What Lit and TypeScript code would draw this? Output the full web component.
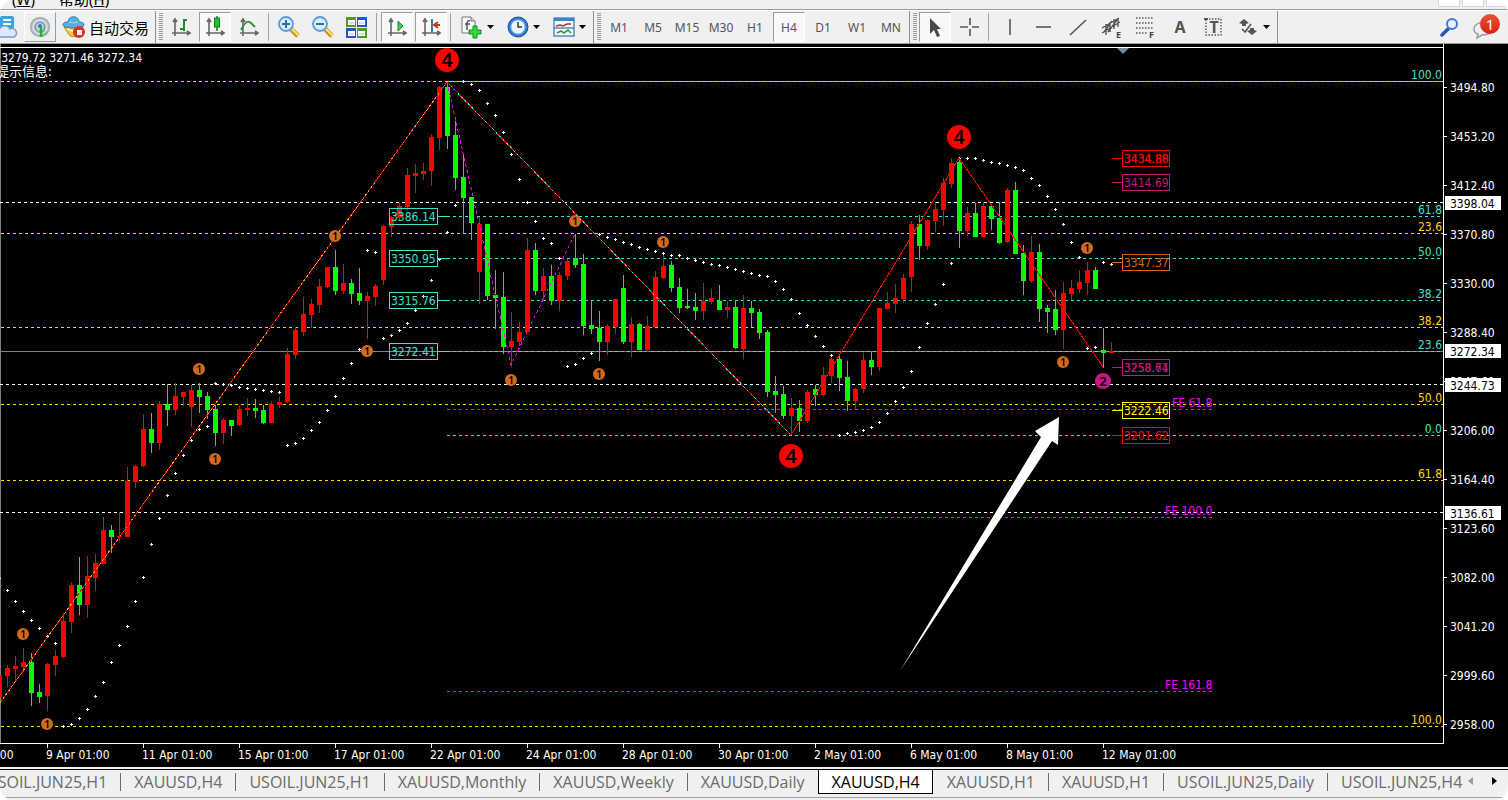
import { LitElement, html, svg, css } from "lit";
import { customElement, state } from "lit/decorators.js";
import { classMap } from "lit/directives/class-map.js";

type Dir = "r" | "g";

/* One row per bar, eight pixels apart: high, body top, body bottom, low, direction. */
const BARS: [number, number, number, number, Dir][] = [
  [675, 675, 697, 697, "r"], [665, 668, 676, 687, "r"], [656, 666, 669, 682, "r"], [648, 662, 667, 672, "r"],
  [653, 662, 693, 706, "g"], [684, 692, 697, 703, "g"], [663, 664, 696, 711, "r"], [650, 656, 665, 676, "r"],
  [613, 621, 657, 658, "r"], [582, 585, 622, 633, "r"], [557, 585, 605, 615, "g"], [556, 576, 605, 618, "r"],
  [554, 563, 578, 591, "r"], [517, 530, 564, 564, "r"], [525, 530, 537, 553, "g"], [512, 536, 537, 541, "r"],
  [467, 481, 537, 537, "r"], [465, 466, 482, 488, "r"], [414, 429, 466, 467, "r"], [413, 429, 443, 453, "g"],
  [401, 404, 443, 450, "r"], [384, 404, 410, 426, "g"], [383, 396, 410, 415, "r"], [392, 392, 397, 406, "r"],
  [385, 390, 407, 427, "r"], [383, 390, 397, 413, "g"], [392, 396, 410, 419, "g"], [405, 409, 433, 446, "g"],
  [418, 420, 433, 444, "r"], [420, 420, 426, 436, "g"], [406, 409, 425, 426, "r"], [398, 408, 410, 416, "r"],
  [399, 408, 411, 418, "g"], [405, 410, 423, 424, "g"], [401, 404, 423, 423, "r"], [397, 402, 405, 408, "r"],
  [348, 354, 402, 403, "r"], [327, 330, 355, 359, "r"], [297, 314, 332, 336, "r"], [299, 304, 315, 328, "r"],
  [279, 286, 305, 313, "r"], [267, 267, 287, 288, "r"], [250, 267, 291, 295, "g"], [264, 283, 291, 294, "r"],
  [279, 283, 294, 304, "g"], [268, 293, 301, 305, "g"], [292, 296, 301, 339, "r"], [284, 286, 297, 306, "r"],
  [225, 226, 280, 285, "r"], [216, 217, 227, 237, "r"], [203, 206, 218, 221, "r"], [168, 175, 207, 210, "r"],
  [164, 173, 176, 193, "r"], [163, 171, 174, 180, "r"], [134, 137, 171, 186, "r"], [86, 87, 138, 150, "r"],
  [82, 87, 136, 149, "g"], [121, 135, 178, 190, "g"], [153, 177, 198, 234, "g"], [197, 197, 223, 240, "g"],
  [217, 224, 272, 304, "r"], [224, 224, 296, 300, "g"], [270, 295, 298, 329, "g"], [272, 297, 347, 354, "g"],
  [312, 341, 347, 367, "r"], [322, 332, 342, 346, "r"], [238, 250, 332, 332, "r"], [243, 250, 291, 295, "g"],
  [268, 276, 291, 301, "r"], [265, 276, 301, 305, "g"], [272, 275, 301, 311, "r"], [259, 261, 276, 280, "r"],
  [234, 258, 265, 268, "g"], [254, 264, 326, 335, "g"], [301, 325, 329, 334, "g"], [311, 328, 342, 361, "g"],
  [324, 326, 342, 355, "r"], [299, 299, 327, 334, "r"], [275, 288, 342, 344, "g"], [317, 324, 342, 357, "r"],
  [323, 324, 350, 350, "g"], [316, 326, 350, 352, "r"], [271, 277, 327, 327, "r"], [254, 266, 278, 279, "r"],
  [261, 265, 288, 292, "g"], [278, 287, 308, 313, "g"], [289, 306, 308, 309, "g"], [293, 307, 311, 320, "g"],
  [283, 301, 311, 320, "r"], [289, 298, 302, 304, "r"], [285, 301, 310, 310, "g"], [301, 307, 310, 318, "r"],
  [300, 307, 348, 349, "g"], [295, 308, 349, 359, "r"], [301, 308, 313, 327, "g"], [309, 312, 333, 339, "g"],
  [330, 332, 392, 397, "g"], [376, 391, 395, 413, "g"], [386, 394, 416, 419, "g"], [398, 408, 416, 434, "r"],
  [400, 408, 421, 432, "g"], [390, 392, 421, 423, "r"], [385, 389, 395, 406, "g"], [367, 375, 395, 396, "r"],
  [356, 359, 376, 383, "r"], [355, 359, 378, 391, "g"], [361, 377, 401, 411, "g"], [388, 389, 401, 409, "r"],
  [353, 360, 389, 393, "r"], [352, 360, 367, 375, "g"], [308, 308, 367, 371, "r"], [292, 303, 309, 309, "r"],
  [284, 298, 304, 313, "r"], [274, 278, 299, 303, "r"], [221, 224, 277, 292, "r"], [215, 224, 246, 260, "g"],
  [220, 220, 246, 250, "r"], [202, 209, 221, 232, "r"], [178, 183, 210, 226, "r"], [158, 163, 184, 188, "r"],
  [159, 162, 231, 248, "g"], [207, 213, 231, 236, "r"], [203, 213, 237, 237, "g"], [202, 206, 237, 237, "r"],
  [205, 206, 219, 230, "g"], [202, 218, 243, 244, "g"], [188, 190, 242, 243, "r"], [182, 190, 254, 254, "g"],
  [245, 253, 281, 295, "g"], [236, 252, 281, 283, "r"], [244, 252, 309, 322, "g"], [305, 308, 312, 333, "g"],
  [290, 309, 330, 335, "g"], [282, 293, 330, 349, "r"], [280, 288, 294, 300, "r"], [270, 282, 289, 293, "r"],
  [262, 270, 283, 295, "r"], [267, 270, 289, 289, "g"], [328, 350, 353, 368, "g"], [342, 351, 353, 353, "r"],
];

/* Parabolic SAR, one value per bar in the same order. */
const SAR = [
  578, 590, 601, 611, 620, 628, 636, 643, 726, 724, 718, 709, 696, 682, 662, 645, 626, 601, 577, 544, 518, 495, 473,
  455, 440, 429, 426, 383, 384, 385, 387, 388, 389, 390, 391, 392, 445, 443, 438, 430, 422, 410, 396, 378, 363, 349,
  250, 252, 338, 335, 330, 323, 310, 296, 280, 259, 232, 205, 81, 84, 90, 103, 115, 132, 154, 179, 202, 221, 238, 243,
  258, 366, 364, 358, 353, 234, 237, 239, 242, 244, 247, 249, 251, 253, 255, 255, 258, 260, 262, 264, 265, 267, 269,
  271, 273, 275, 276, 281, 289, 299, 313, 325, 336, 346, 355, 435, 433, 432, 430, 427, 422, 413, 401, 387, 371, 347,
  323, 304, 284, 263, 158, 158, 158, 160, 162, 163, 165, 167, 170, 178, 185, 196, 209, 224, 242, 257, 348, 347, 262, 264,
];

const TEAL = "#40e0d0";
const GOLD = "#ffd700";
const MAGENTA = "#ff00ff";
const PLUM = "#c71585";
const COPPER = "#d2691e";

const FIBS: [string, number, string, number][] = [
  ["100.0", 81, TEAL, 447], ["61.8", 216, TEAL, 447], ["50.0", 258, TEAL, 447], ["38.2", 300, TEAL, 447],
  ["23.6", 351, TEAL, 447], ["0.0", 435, TEAL, 447], ["23.6", 233, GOLD, 1], ["38.2", 327, GOLD, 1],
  ["50.0", 404, GOLD, 1], ["61.8", 480, GOLD, 1], ["100.0", 726, GOLD, 1],
];

const EXPANSIONS: [string, number, number][] = [["FE 61.8", 409, 1172], ["FE 100.0", 517, 1165], ["FE 161.8", 691, 1165]];

const TAGS: [string, number, number, string, string?, string?][] = [
  ["3386.14", 389, 216, TEAL], ["3350.95", 389, 258, TEAL], ["3315.76", 389, 300, TEAL], ["3272.41", 389, 351, TEAL],
  ["3434.80", 1122, 158, "#ff0000", "3434.88", "#ff0000"], ["3414.69", 1122, 182, PLUM], ["3347.37", 1122, 262, COPPER],
  ["3258.64", 1122, 367, PLUM, "3258.71", PLUM], ["3222.46", 1122, 410, "#ffff00"], ["3201.62", 1122, 435, "#ff0000"],
];

const WAVES: [string, number, number, number, string][] = [
  ["1", 23, 634, 6, COPPER], ["1", 47, 724, 6, COPPER], ["1", 199, 369, 6, COPPER], ["1", 215, 459, 6, COPPER],
  ["1", 335, 236, 6, COPPER], ["1", 367, 351, 6, COPPER], ["1", 511, 380, 6, COPPER], ["1", 575, 221, 6, COPPER],
  ["1", 599, 374, 6, COPPER], ["1", 663, 242, 6, COPPER], ["1", 1063, 362, 6, COPPER], ["1", 1087, 248, 6, COPPER],
  ["2", 1103, 381, 8, PLUM], ["4", 447, 60, 12, "#ff0000"], ["4", 791, 456, 12, "#ff0000"], ["4", 959, 137, 12, "#ff0000"],
];

const PRICES = [
  "3494.80", "3453.20", "3412.40", "3370.80", "3330.00", "3288.40", "3247.60",
  "3206.00", "3164.40", "3123.60", "3082.00", "3041.20", "2999.60", "2958.00",
];
const PRICE_MARKS: [string, number][] = [["3398.04", 203], ["3272.34", 351], ["3244.73", 385], ["3136.61", 513]];

const DATES = [
  "7 Apr 01:00", "9 Apr 01:00", "11 Apr 01:00", "15 Apr 01:00", "17 Apr 01:00", "22 Apr 01:00", "24 Apr 01:00",
  "28 Apr 01:00", "30 Apr 01:00", "2 May 01:00", "6 May 01:00", "8 May 01:00", "12 May 01:00",
];

const TABS = [
  "USOIL.JUN25,H1", "XAUUSD,H4", "USOIL.JUN25,H1", "XAUUSD,Monthly", "XAUUSD,Weekly", "XAUUSD,Daily",
  "XAUUSD,H4", "XAUUSD,H1", "XAUUSD,H1", "USOIL.JUN25,Daily", "USOIL.JUN25,H4",
];

/* Distance from the window top to the chart top; the series above are in window pixels. */
const CHART_TOP = 44;

const axes = svg`<path d="M6 5v16M3 18h17M4 7l2-3 2 3M18 16l3 2-3 2" fill="none" stroke="#666" stroke-width="1.6"/>`;

const icons = {
  cloud: svg`<rect x="6" y="1" width="14" height="13" rx="2" fill="#3ba3e6"/><path d="M9 5h8M9 9h8" stroke="#fff" stroke-width="2"/>
    <path d="M5 22a5 5 0 0 1 1-9 6 6 0 0 1 10 1 4 4 0 0 1 4 8z" fill="#dbe8f6" stroke="#7d9cc5" stroke-width="1.5"/>`,
  signal: svg`<circle cx="12" cy="12" r="10" fill="#aebac2"/><path d="M12 12v10a10 10 0 0 0 8-4z" fill="#56c05a"/>
    <circle cx="12" cy="12" r="9.5" fill="none" stroke="#9fb0ba" stroke-width="1.2"/><circle cx="12" cy="12" r="7" fill="none" stroke="#e3e9ec" stroke-width="1.3"/>
    <circle cx="12" cy="12" r="4.5" fill="#c8d6e2" stroke="#7990a3" stroke-width="1.2"/><circle cx="12" cy="11" r="2" fill="#3a78c2"/><path d="M13 12v10" stroke="#2bb03a" stroke-width="2.5"/>`,
  robot: svg`<path d="M2 12l6 9 8 1 5-11z" fill="#f2c53d" stroke="#b98d1d"/><path d="M5 14q7 4 14 0" stroke="#fff1a8" stroke-width="2" fill="none"/>
    <path d="M1 10c0-3 3-3 5-3 0-7 11-7 11 0 2 0 5 0 5 3 0 4-21 4-21 0z" fill="#58aede" stroke="#2f7eb0"/><path d="M7 7q5 2 9 0" stroke="#a9dcf5" fill="none"/>
    <circle cx="17" cy="17" r="6" fill="#e03020"/><rect x="15" y="15" width="5" height="5" fill="#fff"/>`,
  bars: svg`${axes}<path d="M15 4v12M15 5h3M11 14h4" fill="none" stroke="#1e8e2c" stroke-width="2"/>`,
  candles: svg`${axes}<path d="M14 1v15" stroke="#176e20" stroke-width="1.5"/><rect x="11.500" y="3" width="5" height="9" fill="#22c232" stroke="#128020"/>`,
  line: svg`${axes}<path d="M4 15c4-8 7-10 10-7l4 4" fill="none" stroke="#2f8e3e" stroke-width="1.8"/>`,
  zoomIn: svg`<path d="M14 14l7 7" stroke="#c29a22" stroke-width="5"/><path d="M14 13l8 8" stroke="#ffe37a" stroke-width="2"/>
    <circle cx="9" cy="9" r="7" fill="#d4ecfb" stroke="#5a9ad8" stroke-width="1.8"/><path d="M5 9h8M9 5v8" stroke="#2f6f9f" stroke-width="2"/>`,
  zoomOut: svg`<path d="M14 14l7 7" stroke="#c29a22" stroke-width="5"/><path d="M14 13l8 8" stroke="#ffe37a" stroke-width="2"/>
    <circle cx="9" cy="9" r="7" fill="#d4ecfb" stroke="#5a9ad8" stroke-width="1.8"/><path d="M5 9h8" stroke="#2f6f9f" stroke-width="2"/>`,
  tile: svg`<rect x="1" y="2" width="10" height="10" fill="#4a9e1a"/><rect x="12" y="2" width="10" height="10" fill="#1e58c8"/>
    <rect x="1" y="13" width="10" height="10" fill="#1e58c8"/><rect x="12" y="13" width="10" height="10" fill="#4a9e1a"/>
    <path d="M3 5h7v5H3zM13 5h7v5h-7zM3 16h7v5H3zM13 16h7v5h-7z" fill="#fff"/><path d="M4 8h5M14 8h5M4 19h5M14 19h5" stroke="#9fc0e8"/>`,
  scroll: svg`${axes}<path d="M13 6l5 5-5 5z" fill="#3fd04a" stroke="#1c8c28"/>`,
  shift: svg`${axes}<path d="M13 4v13" stroke="#2b6aa8" stroke-width="1.8"/><path d="M21 10h-5M19 7l-4 3 4 3" fill="none" stroke="#c23a18" stroke-width="2"/>`,
  indicators: svg`<path d="M2 2h9l4 4v12H2z" fill="#fbfbfb" stroke="#777"/><path d="M11 2v4h4" fill="#ddd" stroke="#777"/>
    <path d="M10 6q-3-1-3 3v6M5 9h5" fill="none" stroke="#555" stroke-width="1.5"/><path d="M13 11h4v4h4v4h-4v4h-4v-4h-4v-4h4z" fill="#2fdc3a" stroke="#138a1c"/>`,
  clock: svg`<circle cx="12" cy="12" r="10" fill="#2b7de0" stroke="#17509c"/><circle cx="12" cy="12" r="7" fill="#eef4fa" stroke="#9bbbe0"/><path d="M12 7v5h4" fill="none" stroke="#333" stroke-width="1.5"/>`,
  template: svg`<rect x="2" y="3" width="20" height="18" fill="#f5faff" stroke="#2f74bd" stroke-width="1.2"/><path d="M2 3h20v3H2z" fill="#3b83cf"/><path d="M2 13h20" stroke="#2f74bd" stroke-width="1.2"/>
    <path d="M4 11l4-1 3 1 4-2 4 0" fill="none" stroke="#b03a1c" stroke-width="1.6"/><path d="M5 18l4-2 3 2 4-3 3 3" fill="none" stroke="#2f9c3c" stroke-width="1.6"/>`,
  cursor: svg`<path d="M7 3v16l4-4 3 7 3-1-3-7h4z" fill="#484848"/>`,
  cross: svg`<path d="M13 3v7M13 14v7M3 12h8M15 12h7" stroke="#555" stroke-width="1.6"/>`,
  vline: svg`<path d="M13 4v16" stroke="#555" stroke-width="1.6"/>`,
  hline: svg`<path d="M5 12h15" stroke="#555" stroke-width="1.6"/>`,
  trend: svg`<path d="M5 20L21 5" stroke="#555" stroke-width="1.6"/>`,
  channel: svg`<path d="M3 13L20 3M3 18L21 7M7 9v11M11 7v10M15 4v10M19 3v9M5 17l8-11M9 17l9-12" stroke="#555" stroke-width="1.4"/><text class="glyph" x="17" y="23">E</text>`,
  fibo: svg`<path d="M3 3h18M3 8h18M3 13h18M3 18h12" stroke="#555" stroke-width="1.6" stroke-dasharray="1.5 1.5"/><text class="glyph" x="16" y="23">F</text>`,
  text: svg`<text class="letter" x="13" y="18">A</text>`,
  label: svg`<rect x="5" y="4" width="15" height="16" fill="none" stroke="#555" stroke-width="1.4" stroke-dasharray="1.5 1.5"/><rect x="3" y="3" width="4" height="2" fill="#555"/><text class="letter" x="13" y="18">T</text>`,
  shapes: svg`<path d="M8 4l5 4-3 1v2H6V9L3 8zM16 20l-5-4 3-1v-2h4v2l3 1z" fill="#555"/><path d="M6 14l3 3 6-8" fill="none" stroke="#555" stroke-width="1.6"/>`,
  search: svg`<path d="M4 20l6-6" stroke="#2a55c0" stroke-width="3.5" stroke-linecap="round"/><circle cx="14" cy="9" r="5" fill="#e4f0fd" stroke="#3f78d6" stroke-width="2"/>`,
  chat: svg`<path d="M12 7c-5 0-10 3-10 7s3 5 4 5l-1 4 5-3c5 0 10-2 10-6z" fill="#eef0f4" stroke="#9a9ca4" stroke-width="1.5"/>`,
};

type Icon = keyof typeof icons;

@customElement("tool-button")
export class ToolButton extends LitElement {
  static properties = {
    icon: {}, label: {}, caption: {}, pressed: { type: Boolean }, raised: { type: Boolean }, menu: { type: Boolean },
  };
  declare icon: Icon | undefined;
  declare label: string;
  declare caption: string | undefined;
  declare pressed: boolean;
  declare raised: boolean;
  declare menu: boolean;

  static styles = css`
    :host { display: block; flex: none; }
    button {
      display: flex; align-items: center; justify-content: center; gap: 3px;
      box-sizing: border-box; min-width: 32px; height: 30px; padding: 0;
      border: 1px solid transparent; background: none; color: #555;
      font: 12px "Noto Sans", sans-serif;
    }
    .pressed { background: #f8f8f8; border-color: #9b9b9b #fff #fff #9b9b9b; }
    .raised { border-color: #fff #9b9b9b #9b9b9b #fff; }
    .menu { width: 44px; }
    .captioned { width: 95px; color: #000; font: 15px "Noto Sans CJK SC", sans-serif; }
    svg { width: 24px; height: 24px; flex: none; }
    .caret { width: 7px; height: 4px; }
    .glyph { font: bold 9px "Noto Sans", sans-serif; fill: #444; }
    .letter { font: bold 16px "Noto Sans", sans-serif; fill: #555; text-anchor: middle; }
  `;

  render() {
    const look = { pressed: this.pressed, raised: this.raised, menu: this.menu, captioned: !!this.caption };
    return html`<button class=${classMap(look)} aria-label=${this.label} aria-pressed=${this.pressed ? "true" : "false"}>
      ${this.icon ? html`<svg viewBox="0 0 24 24" aria-hidden="true">${icons[this.icon]}</svg>` : this.label}
      ${this.caption ? html`<span>${this.caption}</span>` : null}
      ${this.menu ? html`<svg class="caret" viewBox="0 0 7 4" aria-hidden="true"><path d="M0 0h7L3.5 4z" fill="#000" /></svg>` : null}
    </button>`;
  }
}

@customElement("tool-bar")
export class ToolBar extends LitElement {
  @state() private frame = "H4";

  static styles = css`
    :host {
      display: flex; align-items: center; gap: 2px; height: 32px; overflow: hidden;
      background: #f0f0f0; border-top: 1px solid #fff; border-bottom: 1px solid #9b9b9b;
    }
    .first { margin-left: -10px; }
    .rule { flex: none; width: 1px; height: 28px; margin: 0 2px 0 1px; background: #a0a0a0; }
    .edge { flex: none; width: 1px; height: 32px; margin: 0 1px 0 0; background: #8f8f8f; }
    .grip { flex: none; width: 4px; height: 28px; background: repeating-linear-gradient(#9b9b9b 0 1px, #f0f0f0 1px 2px); }
    .grow { flex: 1; }
    .alerts { position: relative; margin-right: 8px; }
    .badge {
      position: absolute; top: 2px; right: 0; width: 20px; height: 20px; border-radius: 50%;
      background: linear-gradient(#ef5038, #d42410); color: #fff;
      font: 15px/20px "Noto Sans", sans-serif; text-align: center;
    }
  `;

  private tool(icon: Icon, label: string, opts: { pressed?: boolean; raised?: boolean; menu?: boolean } = {}) {
    return html`<tool-button .icon=${icon} .label=${label} .pressed=${!!opts.pressed} .raised=${!!opts.raised} .menu=${!!opts.menu}></tool-button>`;
  }

  render() {
    const rule = html`<span class="rule"></span>`;
    const edge = html`<span class="edge"></span>`;
    const grip = html`<span class="grip"></span>`;
    return html`
      <tool-button class="first" .icon=${"cloud"} .label=${"Cloud"}></tool-button>
      ${this.tool("signal", "Signals", { raised: true })}
      <tool-button .icon=${"robot"} .label=${"自动交易"} .caption=${"自动交易"}></tool-button>
      ${edge}${grip}
      ${this.tool("bars", "Bar chart")}${this.tool("candles", "Candlesticks", { pressed: true })}${this.tool("line", "Line chart")}
      ${rule}
      ${this.tool("zoomIn", "Zoom in")}${this.tool("zoomOut", "Zoom out")}${this.tool("tile", "Tile windows")}
      ${rule}
      ${this.tool("scroll", "Auto scroll", { pressed: true })}${this.tool("shift", "Chart shift", { pressed: true })}
      ${rule}
      ${this.tool("indicators", "Indicators", { menu: true })}${this.tool("clock", "Periods", { menu: true })}${this.tool("template", "Templates", { menu: true })}
      ${edge}${grip}
      ${["M1", "M5", "M15", "M30", "H1", "H4", "D1", "W1", "MN"].map(
        (f) => html`<tool-button .label=${f} .pressed=${f === this.frame} @click=${() => (this.frame = f)}></tool-button>`,
      )}
      ${edge}${grip}
      ${this.tool("cursor", "Cursor", { pressed: true })}${this.tool("cross", "Crosshair")}
      ${rule}
      ${this.tool("vline", "Vertical line")}${this.tool("hline", "Horizontal line")}${this.tool("trend", "Trendline")}
      ${this.tool("channel", "Channel")}${this.tool("fibo", "Fibonacci")}${this.tool("text", "Text")}${this.tool("label", "Text label")}
      ${this.tool("shapes", "Arrows", { menu: true })}
      ${edge}
      <span class="grow"></span>
      ${this.tool("search", "Search")}
      <div class="alerts">${this.tool("chat", "Messages")}<span class="badge">1</span></div>
    `;
  }
}

@customElement("price-chart")
export class PriceChart extends LitElement {
  static styles = css`
    :host {
      display: grid; grid-template: 1fr 23px / 1fr 64px; min-height: 0; background: #000; color: #fff;
      font: 12px "DejaVu Sans Condensed", "DejaVu Sans", sans-serif; font-stretch: condensed;
    }
    svg { display: block; width: 100%; height: 100%; min-height: 0; overflow: hidden; }
    text { fill: #fff; }
    .han { font: 13px "Noto Sans CJK SC", sans-serif; }
    .crisp { shape-rendering: crispEdges; }
    .r { fill: #ff0000; }
    .g { fill: #00ff00; }
    .end { text-anchor: end; }
    .mid { text-anchor: middle; font-family: "Noto Sans", sans-serif; font-weight: 600; fill: #000; }
    .plot { border-right: 1px solid #fff; border-bottom: 1px solid #fff; overflow: hidden; min-width: 0; min-height: 0; }
    .times { display: flex; overflow: hidden; min-width: 0; }
    .first { margin-left: -50px; }
    .time { flex: none; width: 96px; white-space: nowrap; line-height: 15px; }
    .time::before { content: ""; display: block; width: 1px; height: 4px; margin-left: 1px; background: #fff; }
  `;

  private level(y: number, color: string, x1: number, x2: number | string, phase = 0) {
    return svg`<line class="crisp" x1=${x1} x2=${x2} y1=${y + 0.5} y2=${y + 0.5} stroke=${color} stroke-dasharray="3 3" stroke-dashoffset=${phase}></line>`;
  }

  private candle([high, top, bottom, low, dir]: [number, number, number, number, Dir], i: number) {
    const x = i * 8 - 1;
    return svg`<rect class=${dir} x=${x} y=${high} width="1" height=${low - high}></rect>
      <rect class=${dir} x=${x - 2} y=${top} width="5" height=${bottom - top}></rect>`;
  }

  private tag([price, x, y, color, over, overColor]: (typeof TAGS)[number]) {
    const left = x < 600;
    return svg`<rect class="crisp" x=${x + 0.5} y=${y - 7.5} width=${left ? 48 : 47} height="16" fill="none" stroke=${color}></rect>
      <line class="crisp" x1=${left ? x + 48 : x - 10} x2=${left ? x + 61 : x} y1=${y + 0.5} y2=${y + 0.5} stroke=${color}></line>
      <text x=${x + 2} y=${y + 5} style="fill:${color}">${price}</text>
      ${over ? svg`<text x=${x + 2} y=${y + 5} style="fill:${overColor}">${over}</text>` : null}`;
  }

  private wave([n, x, y, r, color]: (typeof WAVES)[number]) {
    const size = r === 12 ? 20 : r === 8 ? 13 : 10;
    return svg`<circle cx=${x} cy=${y} r=${r} fill=${color}></circle>
      <text class="mid" x=${x} y=${y + Math.round(size * 0.36)} font-size=${size}>${n}</text>`;
  }

  render() {
    return html`
      <div class="plot">
        <svg role="img" aria-label="XAUUSD H4">
          <g transform="translate(0 ${-CHART_TOP})">
            <rect x="0" y="44" width="1" height="700" fill="#808080" />
            <rect x="0" y="47" width="100%" height="1" fill="#fff" />
            <path d="M1117 48h12l-6 6z" fill="#778899" />
            ${[202, 384, 512].map((y) => this.level(y, "#fff", 0, "100%", 0))}
            ${FIBS.filter((f) => f[2] === GOLD).map(([, y, c, x]) => this.level(y, c, x, "100%"))}
            ${this.level(81, GOLD, 1, "100%")}
            <rect x="1" y="351" width="100%" height="1" fill="#778899" />
            ${FIBS.filter((f) => f[2] === TEAL).map(([, y, c, x]) => this.level(y, c, x, "100%", y === 81 ? 5 : 0))}
            ${EXPANSIONS.map(([, y]) => this.level(y, MAGENTA, 447, 1214))}
            <g class="crisp">${BARS.map((b, i) => this.candle(b, i))}</g>
            <g class="crisp" fill="#fff">
              ${SAR.map((y, i) => svg`<path d="M${i * 8 - 2} ${y}h3v1h-3zM${i * 8 - 1} ${y - 1}h1v3h-1z"></path>`)}
            </g>
            <g fill="none" class="crisp">
              <path d="M0 703L447 82L791 435L959 158L1103 367" stroke="#ff0000" />
              <path d="M0 703L447 82" stroke="#ffa500" stroke-dasharray="2 3" />
              <path d="M447 82L791 435" stroke=${TEAL} stroke-dasharray="2 3" />
              <path d="M447 82L511 365L575 234" stroke=${MAGENTA} stroke-dasharray="3 3" />
            </g>
            ${FIBS.map(([t, y, c]) => svg`<text class="end" x="100%" y=${y - 2} dx="-1" style="fill:${c}">${t}</text>`)}
            ${EXPANSIONS.map(([t, y, x]) => svg`<text x=${x} y=${y - 2} style="fill:${MAGENTA}">${t}</text>`)}
            ${TAGS.map((t) => this.tag(t))}
            ${WAVES.map((w) => this.wave(w))}
            <path d="M900 671L1041 437L1035 431L1059 417L1058 445L1052 441Z" fill="#fff" />
            <text class="end" x="142" y="62">3279.72 3271.46 3272.34</text>
            <text class="han" x="-4" y="76">提示信息:</text>
          </g>
        </svg>
      </div>
      <svg>
        <g transform="translate(0 ${-CHART_TOP})" class="crisp">
          ${PRICES.map((p, i) => svg`<rect x="0" y=${87 + i * 49} width="3" height="1" fill="#fff"></rect>
            <text x="6" y=${92 + i * 49}>${p}</text>`)}
          ${PRICE_MARKS.map(([p, y]) => svg`<rect x="1" y=${y - 7} width="56" height="14" fill="#fff"></rect>
            <text x="6" y=${y + 5} style="fill:#000">${p}</text>`)}
        </g>
      </svg>
      <div class="times">
        ${DATES.map((d, i) => html`<span class=${classMap({ time: true, first: i === 0 })}>${d}</span>`)}
      </div>
    `;
  }
}

@customElement("app-root")
export class AppRoot extends LitElement {
  @state() private tab = 6;

  static styles = css`
    :host {
      display: flex; flex-direction: column; height: 100vh; box-sizing: border-box; overflow: hidden;
      border-radius: 14px; background: #f0f0f0;
    }
    .menu {
      display: flex; align-items: flex-end; gap: 24px; flex: none; height: 9px; padding-left: 12px;
      border-bottom: 1px solid #9b9b9b; overflow: hidden;
      font: 15px/20px "Noto Sans", "Noto Sans CJK SC", sans-serif;
    }
    .entry { height: 16px; display: flex; align-items: flex-end; color: #000; text-decoration: none; white-space: nowrap; }
    .boxes { display: flex; gap: 2px; margin-left: auto; align-self: flex-start; }
    .box { width: 22px; height: 7px; box-sizing: border-box; padding: 0; border: 1px solid #d8d8d8; border-top: 0; background: #fff; }
    .box::before { content: ""; display: block; width: 6px; height: 1px; margin: -6px auto 0; background: #8a94a4; }
    price-chart { flex: 1; }
    .tabs {
      display: flex; flex: none; height: 24px; padding-bottom: 3px; overflow: hidden;
      border-top: 1px solid #000;
    }
    .strip { display: flex; flex: 1; min-width: 0; overflow: hidden; }
    .tab {
      position: relative; flex: none; height: 24px; box-sizing: border-box; padding: 0 13px 0 14px; border: 0; background: none;
      color: #6b6b6b; font: 16px/20px "Open Sans", sans-serif; white-space: nowrap;
    }
    .tab + .tab::before { content: ""; position: absolute; left: 0; top: 3px; width: 1px; height: 18px; background: #6b6b6b; }
    .tab.on { background: #fff; color: #000; border: 1px solid #000; border-top: 0; padding: 0 12px 0 13px; }
    .tab.on::before, .tab.on + .tab::before { display: none; }
    .strip .tab:first-child { margin-left: -28px; }
    .pager { display: flex; align-items: center; gap: 19px; padding: 0 11px 2px 3px; }
    .step { padding: 0; border: 0; background: none; display: flex; }
    .spacer { flex: none; height: 2px; background: #f0f0f0; }
    .foot { flex: none; height: 2px; background: #f0f0f0; border-top: 1px solid #a0a0a0; }
  `;

  render() {
    return html`
      <nav class="menu">
        <a class="entry" href="#window">(<u>W</u>)</a>
        <a class="entry" href="#help">帮助(<u>H</u>)</a>
        <span class="boxes">${["Minimise", "Restore", "Close"].map((n) => html`<button class="box" aria-label=${n}></button>`)}</span>
      </nav>
      <tool-bar></tool-bar>
      <price-chart></price-chart>
      <div class="spacer"></div>
      <div class="tabs">
        <div class="strip" role="tablist">
          ${TABS.map((t, i) => html`<button role="tab" class=${classMap({ tab: true, on: i === this.tab })}
            aria-selected=${i === this.tab ? "true" : "false"} @click=${() => (this.tab = i)}>${t}</button>`)}
        </div>
        <div class="pager">
          <button class="step" aria-label="Previous"><svg width="5" height="8" viewBox="0 0 5 8"><path d="M5 0v8L0 4z" fill="#999" /></svg></button>
          <button class="step" aria-label="Next"><svg width="5" height="8" viewBox="0 0 5 8"><path d="M0 0v8l5-4z" fill="#000" /></svg></button>
        </div>
      </div>
      <div class="foot"></div>
    `;
  }
}
